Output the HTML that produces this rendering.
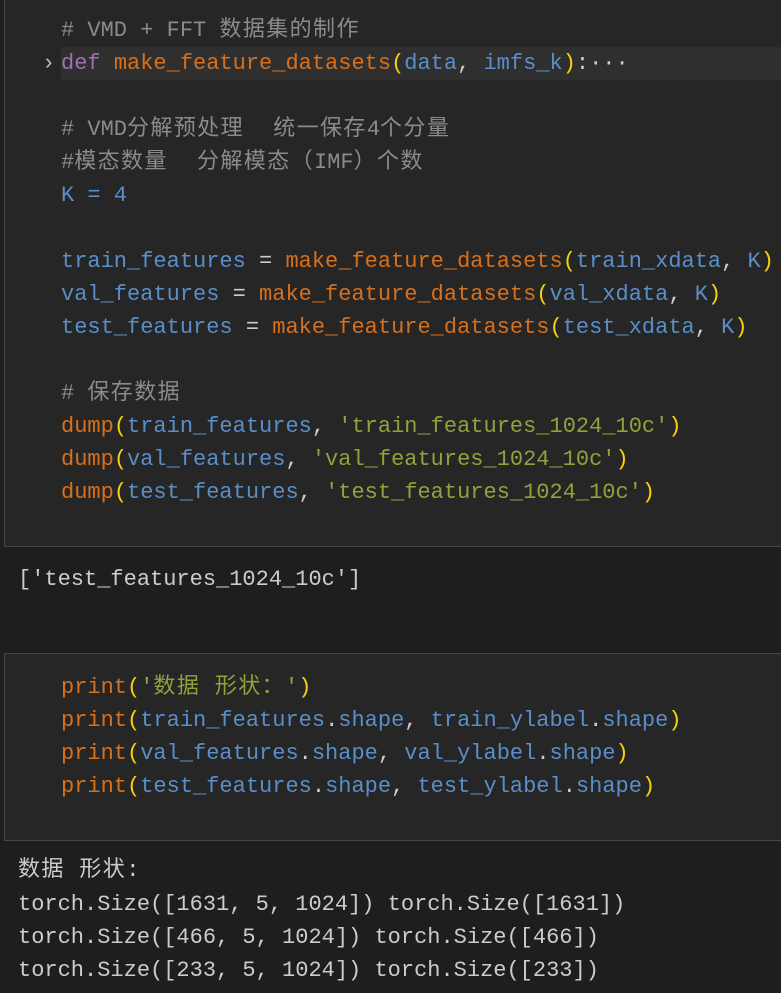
<!DOCTYPE html>
<html><head><meta charset="utf-8"><style>
html,body{margin:0;padding:0;background:#1e1e1e;width:781px;height:993px;overflow:hidden}
body{position:relative;font-family:"Liberation Mono","Noto Sans CJK SC",monospace;font-size:22px;color:#cccccc}
.cell{position:absolute;left:4px;width:790px;background:#262626;border:1px solid #474747;box-sizing:border-box}
.l{position:absolute;left:61px;white-space:pre;height:33px;line-height:33px}
.o{left:18px;color:#cccccc}
.c{color:#8b8b8b}.k{color:#a070b0}.f{color:#d7701c}.v{color:#5a8ec8}.s{color:#8ea33a}.p{color:#f5d20b}.w{color:#cccccc}
.z{letter-spacing:1.4px}
.hl{position:absolute;left:61px;top:47px;width:720px;height:33px;background:#2f2f2f}
</style></head><body>
<div class="cell" style="top:-2px;height:549px"></div>
<div class="hl"></div>
<div class="l" style="top:47px;left:42px;color:#bbb">›</div>
<div class="l c" style="top:14px"># VMD + FFT <span class="z">数据集的制作</span></div>
<div class="l" style="top:47px"><span class="k">def</span> <span class="f">make_feature_datasets</span><span class="p">(</span><span class="v">data</span><span class="w">, </span><span class="v">imfs_k</span><span class="p">)</span><span class="w">:···</span></div>
<div class="l c" style="top:113px"># VMD<span class="z">分解预处理  统一保存</span>4<span class="z">个分量</span></div>
<div class="l c" style="top:146px">#<span class="z">模态数量  分解模态（</span>IMF<span class="z">）个数</span></div>
<div class="l v" style="top:179px">K = 4</div>
<div class="l" style="top:245px"><span class="v">train_features</span><span class="w"> = </span><span class="f">make_feature_datasets</span><span class="p">(</span><span class="v">train_xdata</span><span class="w">, </span><span class="v">K</span><span class="p">)</span></div>
<div class="l" style="top:278px"><span class="v">val_features</span><span class="w"> = </span><span class="f">make_feature_datasets</span><span class="p">(</span><span class="v">val_xdata</span><span class="w">, </span><span class="v">K</span><span class="p">)</span></div>
<div class="l" style="top:311px"><span class="v">test_features</span><span class="w"> = </span><span class="f">make_feature_datasets</span><span class="p">(</span><span class="v">test_xdata</span><span class="w">, </span><span class="v">K</span><span class="p">)</span></div>
<div class="l c" style="top:377px"># <span class="z">保存数据</span></div>
<div class="l" style="top:410px"><span class="f">dump</span><span class="p">(</span><span class="v">train_features</span><span class="w">, </span><span class="s">'train_features_1024_10c'</span><span class="p">)</span></div>
<div class="l" style="top:443px"><span class="f">dump</span><span class="p">(</span><span class="v">val_features</span><span class="w">, </span><span class="s">'val_features_1024_10c'</span><span class="p">)</span></div>
<div class="l" style="top:476px"><span class="f">dump</span><span class="p">(</span><span class="v">test_features</span><span class="w">, </span><span class="s">'test_features_1024_10c'</span><span class="p">)</span></div>
<div class="l o" style="top:563px">['test_features_1024_10c']</div>
<div class="cell" style="top:653px;height:188px"></div>
<div class="l" style="top:671px"><span class="f">print</span><span class="p">(</span><span class="s">'<span class="z">数据 形状：</span>'</span><span class="p">)</span></div>
<div class="l" style="top:704px"><span class="f">print</span><span class="p">(</span><span class="v">train_features</span><span class="w">.</span><span class="v">shape</span><span class="w">, </span><span class="v">train_ylabel</span><span class="w">.</span><span class="v">shape</span><span class="p">)</span></div>
<div class="l" style="top:737px"><span class="f">print</span><span class="p">(</span><span class="v">val_features</span><span class="w">.</span><span class="v">shape</span><span class="w">, </span><span class="v">val_ylabel</span><span class="w">.</span><span class="v">shape</span><span class="p">)</span></div>
<div class="l" style="top:770px"><span class="f">print</span><span class="p">(</span><span class="v">test_features</span><span class="w">.</span><span class="v">shape</span><span class="w">, </span><span class="v">test_ylabel</span><span class="w">.</span><span class="v">shape</span><span class="p">)</span></div>
<div class="l o" style="top:854px"><span class="z">数据 形状</span>:</div>
<div class="l o" style="top:888px">torch.Size([1631, 5, 1024]) torch.Size([1631])</div>
<div class="l o" style="top:921px">torch.Size([466, 5, 1024]) torch.Size([466])</div>
<div class="l o" style="top:954px">torch.Size([233, 5, 1024]) torch.Size([233])</div>
</body></html>
